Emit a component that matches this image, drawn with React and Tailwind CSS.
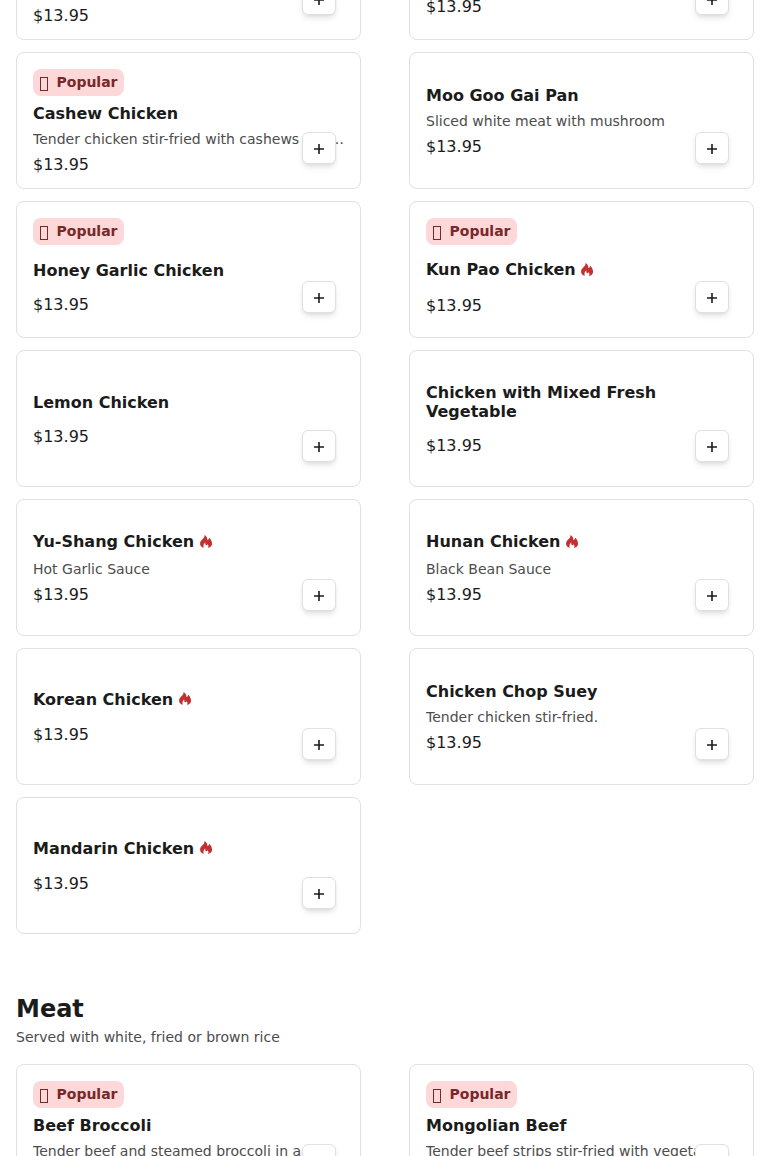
import React from 'react';

const sections = [
	{
		name: 'Chicken',
		items: [
			{ name: 'Sweet and Sour Chicken', desc: 'Crispy chicken in sweet and sour sauce', price: 13.95, popular: true },
			{ name: 'Chicken Broccoli', price: 13.95, popular: true },
			{ name: 'Cashew Chicken', desc: 'Tender chicken stir-fried with cashews and vegetables', price: 13.95, popular: true },
			{ name: 'Moo Goo Gai Pan', desc: 'Sliced white meat with mushroom', price: 13.95 },
			{ name: 'Honey Garlic Chicken', price: 13.95, popular: true },
			{ name: 'Kun Pao Chicken', price: 13.95, popular: true, spicy: true },
			{ name: 'Lemon Chicken', price: 13.95 },
			{ name: 'Chicken with Mixed Fresh Vegetable', price: 13.95 },
			{ name: 'Yu-Shang Chicken', desc: 'Hot Garlic Sauce', price: 13.95, spicy: true },
			{ name: 'Hunan Chicken', desc: 'Black Bean Sauce', price: 13.95, spicy: true },
			{ name: 'Korean Chicken', price: 13.95, spicy: true },
			{ name: 'Chicken Chop Suey', desc: 'Tender chicken stir-fried.', price: 13.95 },
			{ name: 'Mandarin Chicken', price: 13.95, spicy: true },
		],
	},
	{
		name: 'Meat',
		note: 'Served with white, fried or brown rice',
		items: [
			{ name: 'Beef Broccoli', desc: 'Tender beef and steamed broccoli in a wok', price: 13.95, popular: true },
			{ name: 'Mongolian Beef', desc: 'Tender beef strips stir-fried with vegetable', price: 13.95, popular: true },
		],
	},
];

function SpicyIcon() {
	return (
		<svg className="mb-px ml-[5.5px] h-[13px] w-[12.5px] shrink-0 text-[#c4302f]" viewBox="0 0 37 39" fill="currentColor">
			<path d="M13 0c7 4 9 9 9 15 3-1 5-4 5-7 6 5 9 12 9 18 0 7-5 12-13 13 3-3 3-8-1-11-1 3-3 4-5 2-2-2-2-5-1-8-5 4-7 9-5 16C4 36 0 32 0 26c0-6 3-9 7-13 4-4 7-7 6-13z" />
		</svg>
	);
}

function MenuItem({ item }) {
	return (
		<div className="relative flex h-[137px] flex-col rounded-lg border border-[#e0e0e0] bg-white p-4">
			{item.popular && (
				<span className="mb-2 flex h-[27px] w-[91px] shrink-0 items-center rounded-lg bg-[#fdd8d8] pb-0.5 pl-[6.5px] text-sm font-bold text-[#7a272a]">
					<span className="mt-[5px] mr-[9px] h-[14px] w-[8px] border border-[#7a272a]" />
					Popular
				</span>
			)}
			<div className="flex min-h-0 grow flex-col justify-center">
				<h3 className={`mt-px flex shrink-0 items-center text-base leading-[19px] font-bold ${item.spicy ? 'mb-[1.5px]' : ''}`}>
					{item.name}
					{item.spicy && <SpicyIcon />}
				</h3>
				{item.desc && <p className="mt-1.5 shrink-0 truncate text-sm leading-5 text-[#4c4c4c]">{item.desc}</p>}
				<p className={`shrink-0 text-base leading-[19px] ${item.desc ? 'mt-1.5' : 'mt-[15px]'}`}>${item.price}</p>
			</div>
			<button className="absolute right-6 bottom-6 flex h-8 w-[34px] items-center justify-center rounded-md border border-[#e0e0e0] bg-white pt-0.5 shadow-md">
				<svg className="size-[10px]" viewBox="0 0 10 10" stroke="currentColor" strokeWidth="1.6"><path d="M5 0v10M0 5h10" /></svg>
			</button>
		</div>
	);
}

function App() {
	return (
		<div className="h-[1156px] overflow-hidden bg-white px-4 font-['DejaVu_Sans',sans-serif] text-[#1b1b1b]">
			<div className="-mt-[97px]">
				{sections.map((section) => (
					<section key={section.name} className="mb-[59px]">
						{section.note && (
							<div className="mb-[17px]">
								<h2 className="text-2xl leading-8 font-bold">{section.name}</h2>
								<p className="mt-0.5 text-sm leading-5 text-[#4c4c4c]">{section.note}</p>
							</div>
						)}
						<div className="grid grid-cols-2 gap-x-12 gap-y-3">
							{section.items.map((item) => <MenuItem key={item.name} item={item} />)}
						</div>
					</section>
				))}
			</div>
		</div>
	);
}

export default App;
